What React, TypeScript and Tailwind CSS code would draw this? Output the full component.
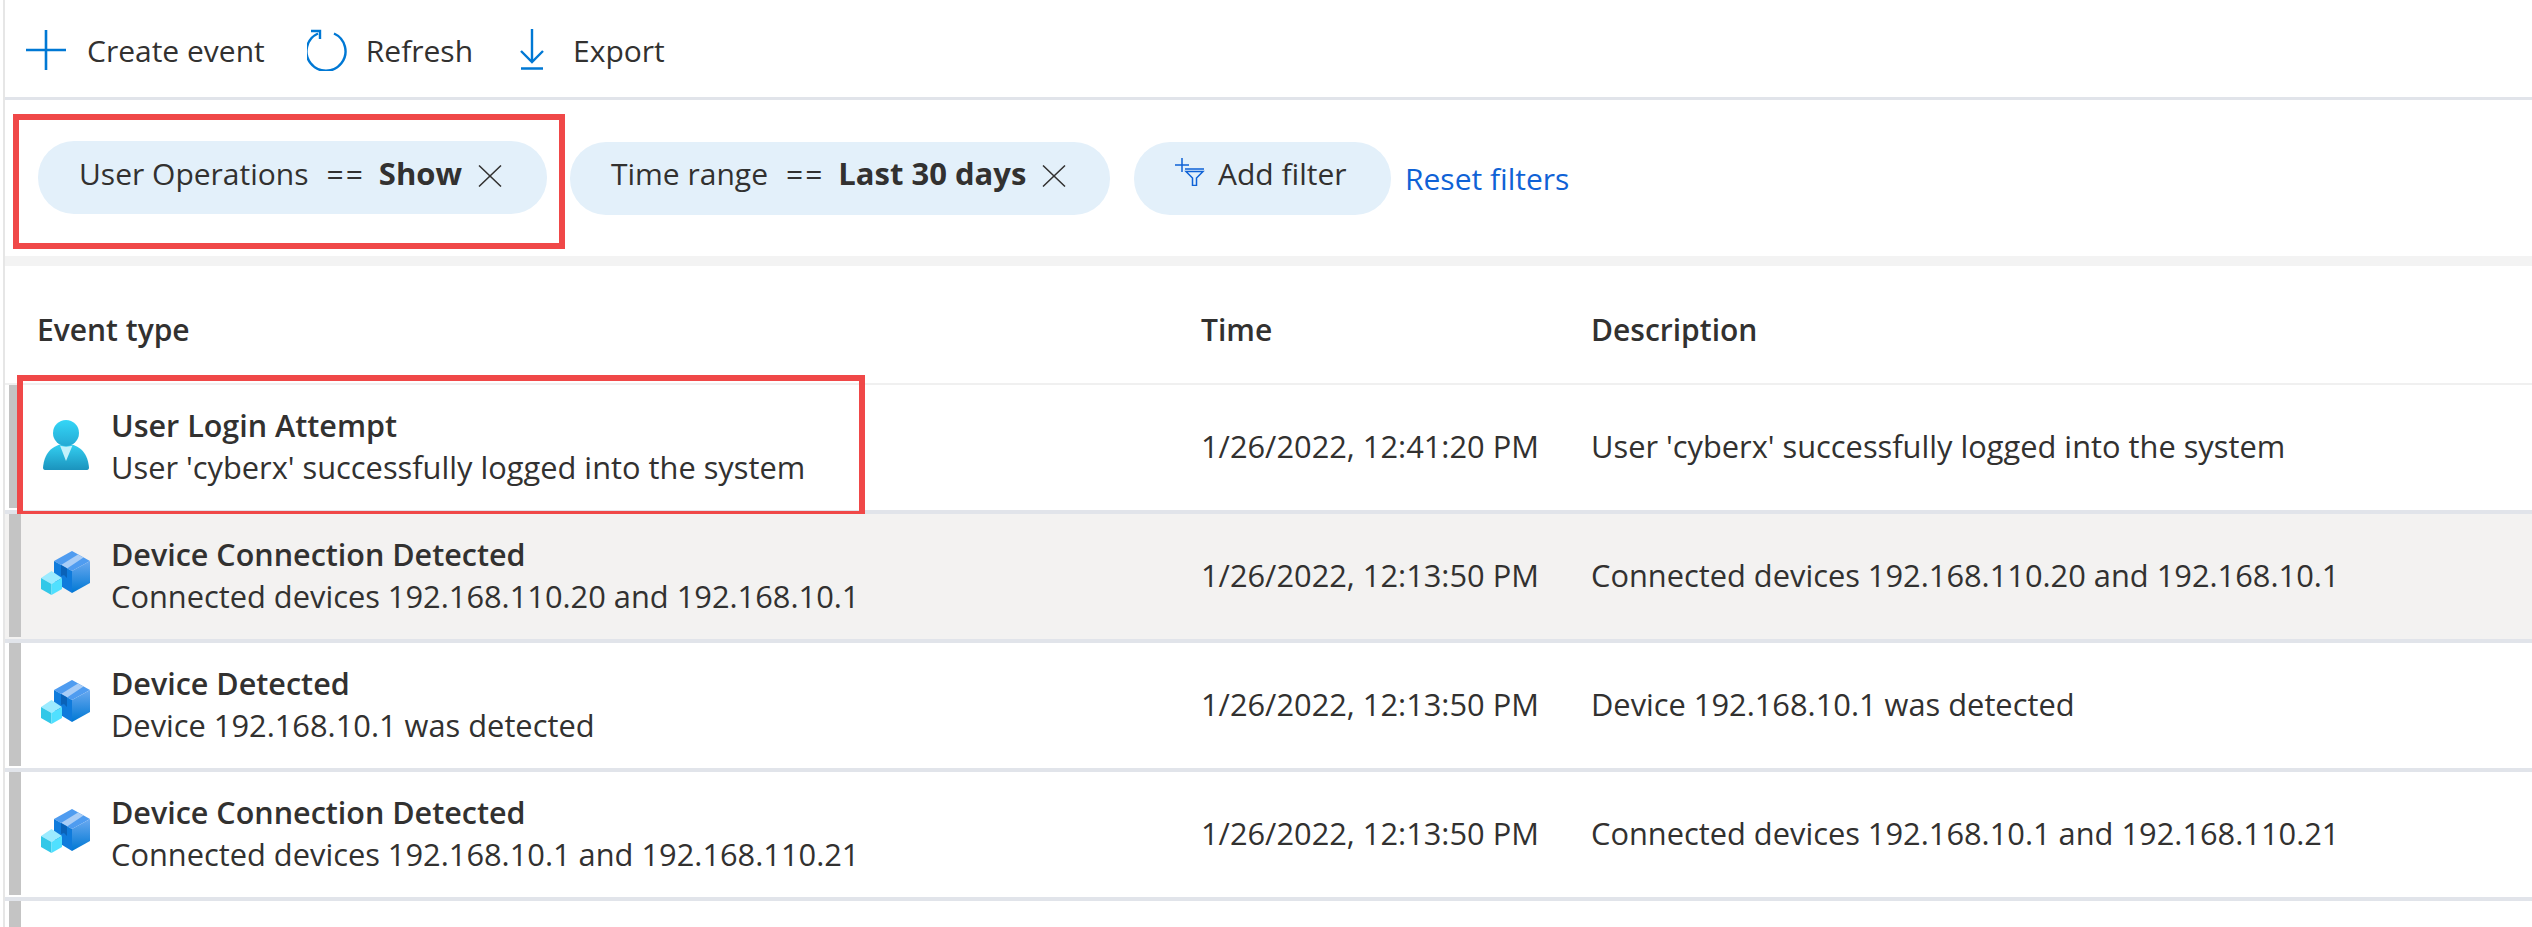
import React from 'react';

type EventRow = {
  kind: 'user' | 'device';
  title: string;
  description: string;
  time: string;
  selected?: boolean;
  boxed?: boolean;
};

const rows: EventRow[] = [
  {
    kind: 'user',
    title: 'User Login Attempt',
    description: "User 'cyberx' successfully logged into the system",
    time: '1/26/2022, 12:41:20 PM',
    boxed: true,
  },
  {
    kind: 'device',
    title: 'Device Connection Detected',
    description: 'Connected devices 192.168.110.20 and 192.168.10.1',
    time: '1/26/2022, 12:13:50 PM',
    selected: true,
  },
  {
    kind: 'device',
    title: 'Device Detected',
    description: 'Device 192.168.10.1 was detected',
    time: '1/26/2022, 12:13:50 PM',
  },
  {
    kind: 'device',
    title: 'Device Connection Detected',
    description: 'Connected devices 192.168.10.1 and 192.168.110.21',
    time: '1/26/2022, 12:13:50 PM',
  },
];

const UserIcon = () => (
  <svg width="46" height="50" viewBox="0 0 46 50" className="shrink-0">
    <defs>
      <linearGradient id="userHead" x1="0" y1="0" x2="0" y2="1">
        <stop offset="0" stopColor="#34d6f7" />
        <stop offset="1" stopColor="#25aad4" />
      </linearGradient>
      <linearGradient id="userBody" x1="0" y1="0" x2="0" y2="1">
        <stop offset="0" stopColor="#34d0f2" />
        <stop offset="1" stopColor="#1b93bd" />
      </linearGradient>
    </defs>
    <path d="M2 50C0.6 50 0 49 0 47.5 1 35 8 24 23 24 38 24 45 35 46 47.5 46 49 45.4 50 44 50Z" fill="url(#userBody)" />
    <circle cx="23" cy="13" r="13" fill="url(#userHead)" />
    <path d="M17 25.5C20 27 26 27 29.5 25.5L23 41Z" fill="#c3f1fb" />
  </svg>
);

const DeviceIcon = () => (
  <svg width="50" height="46" viewBox="0 0 50 46" className="shrink-0">
    <defs>
      <linearGradient id="cubeRight" x1="0" y1="0" x2="0" y2="1">
        <stop offset="0" stopColor="#6aa9f0" />
        <stop offset="1" stopColor="#0078d4" />
      </linearGradient>
    </defs>
    <path d="M31 0 49 10 31 20 13 10Z" fill="#4f9cf0" />
    <path d="M20 14 37 3.5 42.5 6.5 26 17.5Z" fill="#a9cdf6" />
    <path d="M13 10 31 20V42L13 31Z" fill="#0f7bdc" />
    <path d="M49 10V32L31 42V20Z" fill="url(#cubeRight)" />
    <path d="M20 14 26 17.5V27L23 24 20 25Z" fill="#0a62b8" />
    <path d="M10.5 20 21 27 10.5 33 0 27Z" fill="#9cebff" />
    <path d="M0 27 10.5 33V44L0 38Z" fill="#32c8e8" />
    <path d="M21 27V38L10.5 44V33Z" fill="#50e0ff" />
  </svg>
);

const Pill = ({ field, value }: { field: string; value: string }) => (
  <div className="flex h-[73px] items-center rounded-[36px] bg-[#e3f0fa] pl-[41px] pb-[9px]">
    <span>{field}</span>
    <span className="ml-[18px] tracking-[2px]">==</span>
    <span className="ml-[14px] text-[31px] font-bold">{value}</span>
    <svg width="24" height="22" viewBox="0 0 24 22" fill="none" stroke="#323130" strokeWidth="1.5" className="ml-[16px] mt-[5px]">
      <path d="M1 0.5 23 21.5M23 0.5 1 21.5" />
    </svg>
  </div>
);

export default function App() {
  return (
    <div className="h-[927px] w-[2532px] overflow-hidden bg-white pl-[3px] font-['Open_Sans',sans-serif] text-[30px] text-[#323130]">
      <div className="flex h-full flex-col border-l-[2px] border-[#e6e6e6]">
        <div className="flex h-[100px] items-center border-b-[3px] border-[#e1e4ea] pl-[21px] pt-[4px]">
          <button className="flex items-center">
            <svg width="40" height="40" viewBox="0 0 40 40" fill="none" stroke="#0078d4" strokeWidth="2.6" className="-mt-[2px]">
              <path d="M20 0V40M0 20H40" />
            </svg>
            <span className="ml-[21px]">Create event</span>
          </button>
          <button className="ml-[42px] flex items-center">
            <svg width="42" height="42" viewBox="0 0 42 42" fill="none" stroke="#0078d4" strokeWidth="2.4" className="-mt-[2px]">
              <path d="M27 4.5A19.5 19.5 0 1 1 11 4.5" />
              <path d="M4 2H13V10" />
            </svg>
            <span className="ml-[17px]">Refresh</span>
          </button>
          <button className="ml-[45px] flex items-center">
            <svg width="28" height="42" viewBox="0 0 28 42" fill="none" stroke="#0078d4" strokeWidth="2.4" className="-mt-[2px]">
              <path d="M14 0V33M3 22 14 33 25 22M3 39.5H25" />
            </svg>
            <span className="ml-[27px]">Export</span>
          </button>
        </div>

        <div className="flex h-[156px] items-center pl-[8px]">
          <div className="mt-[7px] flex h-[135px] w-[552px] items-center border-[6px] border-[#f04848] pl-[19px]">
            <div className="mb-[8px] w-[509px] shrink-0">
              <Pill field="User Operations" value="Show" />
            </div>
          </div>
          <div className="ml-[5px] w-[540px] shrink-0">
            <Pill field="Time range" value="Last 30 days" />
          </div>
          <div className="ml-[24px] flex h-[73px] w-[257px] shrink-0 items-center rounded-[36px] bg-[#e3f0fa] pl-[41px] pb-[9px]">
            <svg width="30" height="28" viewBox="0 0 30 28" fill="none" stroke="#0f62d6" strokeWidth="1.5" className="mb-[4px]">
              <path d="M7 0V14M0 7H14" />
              <path d="M10 11H29M11 13.5H28L21.5 20V27.5H17.5V20Z" />
            </svg>
            <span className="ml-[13px]">Add filter</span>
          </div>
          <a href="#" className="ml-[14px] mt-[1px] text-[#0f62d6]">Reset filters</a>
        </div>

        <div className="h-[10px] bg-[#f3f3f3]" />

        <div className="grid h-[119px] grid-cols-[1164px_390px_1fr] items-center border-b-[2px] border-[#f0f0f0] pl-[32px] pt-[10px] font-semibold">
          <div>Event type</div>
          <div>Time</div>
          <div>Description</div>
        </div>

        {rows.map((row, i) => (
          <div
            key={i}
            className={`relative flex h-[129px] shrink-0 border-b-[4px] border-[#e1e4ea] pl-[4px] text-[30.8px] ${row.selected ? 'bg-[#f3f2f1]' : ''}`}
          >
            <div className="mb-[2px] w-[12px] shrink-0 bg-[#c4c4c4]" />
            <div className="grid grow grid-cols-[1180px_390px_1fr] items-center pb-[3px]">
              <div className="flex items-center">
                <div className="flex w-[90px] shrink-0 justify-center pb-[3px]">
                  {row.kind === 'user' ? <UserIcon /> : <DeviceIcon />}
                </div>
                <div className="flex flex-col">
                  <div className="text-[30.5px] leading-[42px] font-semibold">{row.title}</div>
                  <div className="leading-[42px]">{row.description}</div>
                </div>
              </div>
              <div>{row.time}</div>
              <div>{row.description}</div>
            </div>
            {row.boxed && (
              <div className="absolute -top-[10px] left-[12px] h-[142px] w-[848px] border-[6px] border-[#f04848]" />
            )}
          </div>
        ))}
        <div className="flex grow pl-[4px]">
          <div className="w-[12px] bg-[#c4c4c4]" />
        </div>
      </div>
    </div>
  );
}
